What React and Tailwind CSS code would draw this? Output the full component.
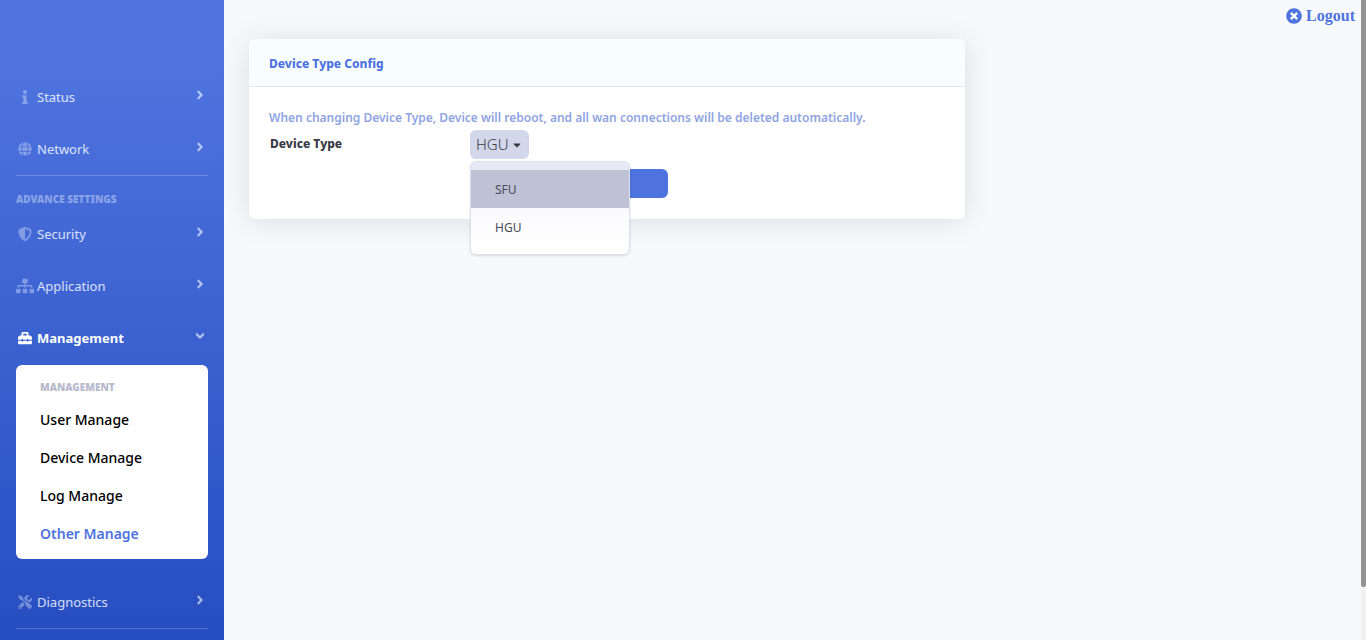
import clsx from 'clsx'
import { useState } from 'react'
import {
  FaAngleDown,
  FaAngleRight,
  FaCaretDown,
  FaGlobe,
  FaInfo,
  FaShieldAlt,
  FaSitemap,
  FaTimesCircle,
  FaToolbox,
  FaTools,
} from 'react-icons/fa'

const deviceTypes = ['SFU', 'HGU']
const manageLinks = ['User Manage', 'Device Manage', 'Log Manage', 'Other Manage']

function NavItem({ icon: Icon, label, active, wide, children }) {
  const Angle = active ? FaAngleDown : FaAngleRight
  return (
    <li>
      <a
        href="#"
        aria-expanded={!!active}
        className={clsx(
          'flex items-center px-4 py-4 text-[13px] leading-5',
          active ? 'font-bold text-white' : 'text-white/80'
        )}
      >
        <span className={clsx('flex w-[18px] mr-[3px] justify-center', active ? 'text-white' : 'text-white/35')}>
          <Icon className={clsx('shrink-0', wide ? 'size-[18px]' : 'size-3.5')} />
        </span>
        <span className="flex-1">{label}</span>
        <Angle className="size-3.5 mr-px mb-1 text-white/60" />
      </a>
      {children}
    </li>
  )
}

function Sidebar() {
  return (
    <nav className="w-56 shrink-0 overflow-hidden pt-[71px] bg-[linear-gradient(180deg,#4e73df_11%,#224abe_109%)]">
      <ul>
        <NavItem icon={FaInfo} label="Status" />
        <NavItem icon={FaGlobe} label="Network" />
      </ul>
      <hr className="mx-4 border-white/20" />
      <h2 className="mt-[15px] mb-px px-4 text-[10px] leading-4 font-black uppercase text-white/40">
        Advance Settings
      </h2>
      <ul>
        <NavItem icon={FaShieldAlt} label="Security" />
        <NavItem icon={FaSitemap} label="Application" wide />
        <NavItem icon={FaToolbox} label="Management" active>
          <div className="mx-4 mt-px mb-[17px] rounded-md bg-white pt-3.5 pb-1.5">
            <h3 className="mb-1.5 px-6 text-[10px] leading-4 font-black uppercase text-[#b7b9cc]">Management</h3>
            <ul>
              {manageLinks.map((link) => (
                <li key={link}>
                  <a
                    href="#"
                    className={clsx(
                      'block px-6 py-2 text-sm leading-[22px]',
                      link === 'Other Manage' ? 'font-semibold text-[#4e73df]' : 'font-medium text-black'
                    )}
                  >
                    {link}
                  </a>
                </li>
              ))}
            </ul>
          </div>
        </NavItem>
        <NavItem icon={FaTools} label="Diagnostics" />
      </ul>
      <hr className="mx-4 border-white/20" />
    </nav>
  )
}

function DeviceTypeSelect({ value, onChange }) {
  const [open, setOpen] = useState(true)
  return (
    <div className="relative">
      <button
        id="device-type"
        type="button"
        aria-haspopup="menu"
        aria-expanded={open}
        aria-labelledby="device-type-label device-type"
        onClick={() => setOpen(!open)}
        className="flex h-[29px] items-center gap-0.5 rounded-md bg-[#d2d7ea] px-1.5 text-[15px] font-light text-[#3a3b45]"
      >
        {value}
        <FaCaretDown className="size-3" />
      </button>
      {open && (
        <div
          role="menu"
          className="absolute left-0 top-full z-10 mt-0.5 w-40 rounded-md border border-[#dddfeb] bg-linear-to-b from-[#e6e9f6] from-10% via-[#fbfbfe] via-55% to-white pt-2 pb-2 shadow"
        >
          {deviceTypes.map((type) => (
            <button
              key={type}
              type="button"
              role="menuitem"
              onClick={() => {
                onChange(type)
                setOpen(false)
              }}
              className={clsx(
                'block w-full px-6 pt-2 pb-1.5 text-left text-xs leading-6 text-[#4a4b55]',
                type === 'SFU' && 'bg-[#bfc2d4]'
              )}
            >
              {type}
            </button>
          ))}
        </div>
      )}
    </div>
  )
}

export default function App() {
  const [deviceType, setDeviceType] = useState('HGU')
  return (
    <div className="flex h-screen overflow-hidden bg-[#f8f9fc] font-['Noto_Sans','Open_Sans',sans-serif]">
      <Sidebar />
      <main className="min-w-0 flex-1">
        <header className="flex h-[39px] justify-end pr-1.5 pt-1">
          <a
            href="#"
            className="flex h-6 items-center gap-1 font-['Liberation_Serif',serif] text-base font-bold text-[#4e73df]"
          >
            <FaTimesCircle className="size-4" />
            Logout
          </a>
        </header>
        <section className="mx-[25px] max-w-[716px] rounded-md bg-white shadow-[0_2px_28px_rgba(58,59,69,0.15)]">
          <h1 className="rounded-t-md border-b border-[#e3e6f0] bg-[#f8fefe] px-5 pt-3 pb-2.5 text-xs leading-[25px] font-extrabold text-[#4e73df]">
            Device Type Config
          </h1>
          <form className="px-5 pt-5 pb-[21px]" onSubmit={(e) => e.preventDefault()}>
            <p className="mb-px text-xs leading-[22px] font-semibold text-[#8fa4e2]">
              When changing Device Type, Device will reboot, and all wan connections will be deleted automatically.
            </p>
            <div className="flex pl-px">
              <span id="device-type-label" className="w-[200px] text-xs leading-7 font-extrabold text-[#3a3b45]">
                Device Type
              </span>
              <DeviceTypeSelect value={deviceType} onChange={setDeviceType} />
            </div>
            <button
              type="submit"
              aria-label="Apply"
              className="mt-2.5 ml-[201px] block h-[29px] w-[198px] rounded-md bg-[#4e73df]"
            />
          </form>
        </section>
      </main>
      <div aria-hidden="true" className="w-[5px] shrink-0 bg-[#f1f1f1]">
        <div className="h-11/12 rounded-b-sm bg-[#929292]" />
      </div>
    </div>
  )
}
